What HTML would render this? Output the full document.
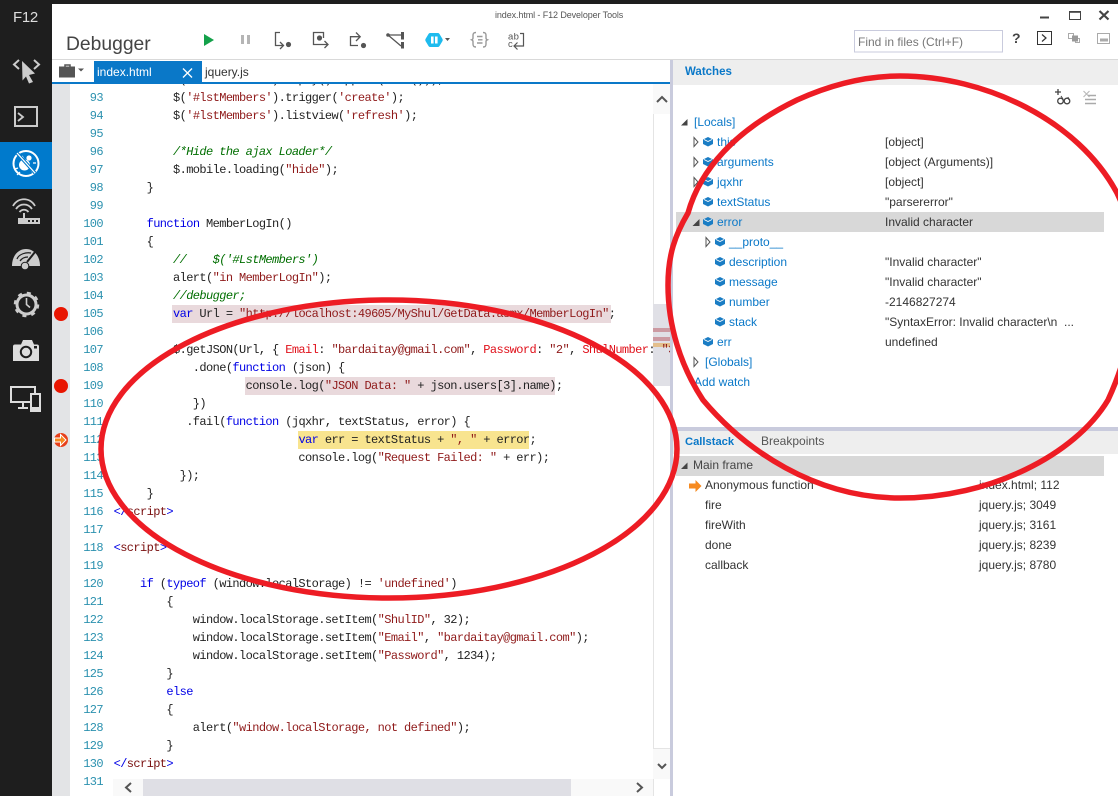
<!DOCTYPE html>
<html><head><meta charset="utf-8"><style>
html,body{margin:0;padding:0;background:#fff}
#p{position:relative;width:1118px;height:796px;overflow:hidden;background:#fff;font-family:"Liberation Sans",sans-serif;font-size:12px;color:#333}
.a{position:absolute}
.t{position:absolute;white-space:pre;line-height:20px;height:20px}
.n{position:absolute;left:70px;width:33px;text-align:right;font:12px/18px "Liberation Mono",monospace;letter-spacing:-.6px;color:#2b91af;height:18px}
.c{position:absolute;left:113.6px;font:12px/18px "Liberation Mono",monospace;letter-spacing:-.6px;color:#222;white-space:pre;height:18px}
.k{color:#0000e6}.s{color:#8f1a1a}.g{color:#006e00;font-style:italic}.r{color:#e0101a}.h{color:#7a1010}
.b{color:#0a78c8}
svg{position:absolute;overflow:visible}
svg text{font-family:"Liberation Sans",sans-serif}
</style></head><body><div id="p">

<!-- chrome -->
<div class="a" style="left:0;top:0;width:1118px;height:4px;background:#1e1e1e"></div>
<div class="a" style="left:0;top:0;width:52px;height:796px;background:#1e1e1e"></div>
<div class="a" style="left:0;top:142px;width:52px;height:47px;background:#007acc"></div>
<div class="a" style="left:13px;top:8px;font-size:15px;letter-spacing:-.3px;line-height:19px;color:#ddd">F12</div>
<div class="t" style="left:495px;top:5px;font-size:9px;letter-spacing:-.1px;color:#555">index.html - F12 Developer Tools</div>
<div class="t" style="left:66px;top:34px;font-size:19.3px;line-height:22px;height:24px;color:#444">Debugger</div>
<div class="a" style="left:52px;top:59px;width:1066px;height:1px;background:#d9d9d9"></div>

<!-- sidebar icons -->
<svg style="left:0;top:0" width="52" height="420" fill="none">
 <path d="M19 60l-5 4.500 5 4.500M34 60l5 4.500-5 4.500" stroke="#ccc" stroke-width="2"/>
 <path d="M22 61l13 12.500-6 1.500 4 7-4 1.500-3-7-3.500 4z" fill="#ccc"/>
 <rect x="15" y="107" width="22" height="19" stroke="#ccc" stroke-width="2"/>
 <path d="M18 113l5 4-5 4" stroke="#ccc" stroke-width="1.800"/>
 <circle cx="26" cy="163.500" r="12.500" stroke="#fff" stroke-width="2"/>
 <ellipse cx="24.500" cy="165" rx="5.500" ry="5.500" fill="#fff"/><circle cx="29" cy="158" r="2.600" fill="#fff"/>
 <path d="M18 168l-3 1M20 172l-3 3M22 156l2 3M33 163h3M31 170l2 3" stroke="#fff" stroke-width="1.200"/>
 <path d="M17 153l18 20" stroke="#007acc" stroke-width="3.400"/><path d="M17 153l18 20" stroke="#fff" stroke-width="1.300"/>
 <path d="M13 206C18 197 30 197 35 206M16 209C20 203 28 203 32 209M19.500 212C22 209 26 209 28.500 212" stroke="#ccc" stroke-width="1.800"/>
 <path d="M23 213h2v5h-2z" fill="#ccc"/><rect x="18" y="218" width="22" height="6" fill="#ccc"/>
 <path d="M28 220h2v2h-2zM32 220h2v2h-2zM36 220h2v2h-2z" fill="#1e1e1e"/>
 <path d="M12 266c0-10 6-17 14-17s14 7 14 17z" fill="#ccc"/>
 <path d="M17 259C19 254 26 252 31 253M20 261C22 258 25 257 28 257" stroke="#1e1e1e" stroke-width="1.200"/>
 <path d="M27 262l8-10" stroke="#1e1e1e" stroke-width="2"/><circle cx="25" cy="266" r="3.800" fill="#ccc" stroke="#1e1e1e"/>
 <circle cx="26.500" cy="304.500" r="9.500" stroke="#ccc" stroke-width="3"/>
 <circle cx="26.500" cy="304.500" r="11.500" stroke="#ccc" stroke-width="2.500" stroke-dasharray="4 5.030"/>
 <path d="M26.500 298v6.500l3.500 3" stroke="#ccc" stroke-width="1.600"/>
 <path d="M15 344.500h6l2-4.500h9l2 4.500h3q2 0 2 2V361H13v-14.500q0-2 2-2z" fill="#ddd"/>
 <circle cx="26" cy="352" r="5.200" fill="#ddd" stroke="#1e1e1e" stroke-width="2"/><rect x="34" y="346" width="3" height="2.500" fill="#1e1e1e"/>
 <rect x="11" y="387" width="24" height="15" stroke="#ddd" stroke-width="2"/>
 <path d="M23 403v4M18 408h10" stroke="#ddd" stroke-width="2"/>
 <rect x="31" y="394" width="9" height="17" fill="#1e1e1e" stroke="#ddd" stroke-width="2"/>
 <rect x="30" y="407" width="11" height="5" fill="#ddd"/>
</svg>

<!-- toolbar icons -->
<svg style="left:0;top:0" width="1118" height="60" fill="none">
 <path d="M204 34l10 6-10 6z" fill="#14a14a"/>
 <path d="M241 35h3v9h-3zM247 35h3v9h-3z" fill="#b5b5b5"/>
 <g stroke="#555" stroke-width="1.300">
  <path d="M280 32.500H275.500V45.500H283M280 42l3.500 3.500-3.500 3.500"/>
  <path d="M323.500 38V32.500H313.500V44.500H328M324.500 41l3.500 3.500-3.500 3.500"/>
  <path d="M358 45.500H350.500V36.700H360M356 32.500l4.200 4.200-4.200 4.300"/>
  <path d="M388 35H401M388 35L401 46"/>
 </g>
 <circle cx="288.500" cy="44.500" r="2.600" fill="#555"/><circle cx="319.500" cy="38" r="2.600" fill="#555"/><circle cx="363.500" cy="45.500" r="2.600" fill="#555"/>
 <path d="M401 32h3v7.500h-3zM401 42h3v6.500h-3z" fill="#555"/><circle cx="388" cy="35" r="1.800" fill="#555"/>
 <path d="M430 33h8q1 0 1.500 1l3 5q.5 1 0 2l-3 5q-.5 1-1.500 1h-8q-1 0-1.500-1l-3-5q-.5-1 0-2l3-5q.5-1 1.500-1z" fill="#1ebbee"/>
 <path d="M431 36.500h2.600v7h-2.600zM435 36.500h2.600v7h-2.600z" fill="#fff"/>
 <path d="M445 38h5l-2.500 3z" fill="#555"/>
 <path d="M476 32.500c-2.500 0-3 1-3 3v2.500c0 1-.5 1.500-1.300 1.800.8.300 1.300.8 1.300 1.800V44c0 2 .5 3 3 3M483 32.500c2.500 0 3 1 3 3v2.500c0 1 .5 1.500 1.300 1.800-.8.300-1.300.8-1.300 1.800V44c0 2-.5 3-3 3M477 36.500h5.500M478 39.800h4.500M477 43h5.500" stroke="#999" stroke-width="1.400"/>
 <text x="508" y="39.500" font-size="9.500" letter-spacing=".4" fill="#555">ab</text>
 <text x="508" y="47" font-size="9.500" fill="#555">c</text>
 <path d="M520 33.500H523.500V46H514M517.500 42.500L514 46l3.500 3.500" stroke="#555" stroke-width="1.200"/>
 <path d="M1040 17.500h9" stroke="#444" stroke-width="2"/>
 <rect x="1069.500" y="11.500" width="11" height="8" stroke="#444" stroke-width="1"/><path d="M1069.500 12h11" stroke="#444" stroke-width="1.600"/>
 <path d="M1099.500 11l9 8.500M1108.500 11l-9 8.500" stroke="#444" stroke-width="2.200"/>
 <rect x="854.500" y="30.500" width="148" height="21.500" stroke="#c9cbdd" fill="#fff"/>
 <rect x="1037.500" y="31.500" width="14" height="13" stroke="#333"/>
 <path d="M1042 34.500l4 3.500-4 3.500" stroke="#333" stroke-width="1.200"/>
 <rect x="1068.500" y="33.500" width="5" height="5" stroke="#aaa"/><rect x="1075.500" y="38.500" width="4" height="4" stroke="#aaa"/><rect x="1072" y="35.500" width="6" height="6" fill="#999"/>
 <rect x="1097.500" y="33.500" width="12" height="10" stroke="#aaa"/><rect x="1100" y="38.500" width="8" height="3" fill="#aaa"/>
</svg>
<div class="t" style="left:858px;top:32px;color:#777;font-size:12px">Find in files (Ctrl+F)</div>
<div class="t" style="left:1012px;top:28px;font-size:14px;font-weight:bold;color:#444">?</div>

<!-- tabs -->
<div class="a" style="left:52px;top:82px;width:618px;height:2px;background:#0a78c8"></div>
<div class="a" style="left:94px;top:61px;width:108px;height:21px;background:#0a78c8"></div>
<div class="t" style="left:97px;top:62px;color:#fff;font-size:12px">index.html</div>
<svg style="left:0;top:60px" width="240" height="24" fill="none">
 <path d="M183 8.500l9 9M192 8.500l-9 9" stroke="#fff" stroke-width="1.300"/>
 <path d="M59 6.500h16v11H59z" fill="#555"/><path d="M65 6.500V5h5v1.500" stroke="#555" stroke-width="1.500"/>
 <path d="M78 8.500h6l-3 3z" fill="#555"/>
</svg>
<div class="t" style="left:205px;top:62px;color:#333;font-size:12px">jquery.js</div>

<!-- gutter -->
<div class="a" style="left:52px;top:84px;width:18px;height:712px;background:#e3e4e6"></div>
<svg style="left:52px;top:300px" width="20" height="160">
 <circle cx="9" cy="14" r="7" fill="#e81500"/><circle cx="9" cy="86" r="7" fill="#e81500"/>
 <circle cx="9" cy="140" r="7" fill="#e8401a"/><path d="M2.500 138h6v-3.500l5.500 5.500-5.500 5.500V142h-6z" fill="#f68a1f" stroke="#fff" stroke-width="1"/>
</svg>

<!-- scrollbars -->
<div class="a" style="left:653px;top:84px;width:17px;height:712px;background:#fff;border-left:1px solid #e4e4e4;box-sizing:border-box"></div>
<div class="a" style="left:653px;top:84px;width:17px;height:30px;background:#f9f9f9"></div>
<div class="a" style="left:653px;top:304px;width:17px;height:82px;background:#e0e0e6"></div>
<div class="a" style="left:653px;top:328px;width:17px;height:4px;background:#cc9aa2"></div>
<div class="a" style="left:653px;top:337px;width:17px;height:4px;background:#cc9aa2"></div>
<div class="a" style="left:653px;top:343px;width:17px;height:4px;background:#e3bf8c"></div>
<div class="a" style="left:653px;top:748px;width:17px;height:31px;background:#f9f9f9;border-top:1px solid #e4e4e4;box-sizing:border-box"></div>
<div class="a" style="left:113px;top:779px;width:540px;height:17px;background:#f9f9f9"></div>
<div class="a" style="left:143px;top:779px;width:428px;height:17px;background:#dfdfe5"></div>
<svg style="left:0;top:0" width="680" height="796" fill="none">
 <path d="M657 102l5-5 5 5" stroke="#555" stroke-width="2"/>
 <path d="M658 764l4 4 4-4" stroke="#555" stroke-width="2"/>
 <path d="M131 783l-5 4.500 5 4.500" stroke="#555" stroke-width="2"/>
 <path d="M637 783l5 4.500-5 4.500" stroke="#555" stroke-width="2"/>
</svg>

<!-- highlights -->
<div class="a" style="left:172px;top:305px;width:439px;height:18px;background:#e9d9dc"></div>
<div class="a" style="left:245px;top:377px;width:310px;height:18px;background:#e9d9dc"></div>
<div class="a" style="left:298px;top:431px;width:231px;height:18px;background:#f8e48f"></div>

<!-- code -->
<div class="a" style="left:70px;top:84px;width:583px;height:695px;overflow:hidden">
 <div class="c" style="left:43.600px;top:-13px">         $('#lstMembers').empty().append(List()));</div>
</div>
<div class="n" style="top:89px">93</div><div class="c" style="top:89px">         $(<span class="s">'#lstMembers'</span>).trigger(<span class="s">'create'</span>);</div>
<div class="n" style="top:107px">94</div><div class="c" style="top:107px">         $(<span class="s">'#lstMembers'</span>).listview(<span class="s">'refresh'</span>);</div>
<div class="n" style="top:125px">95</div>
<div class="n" style="top:143px">96</div><div class="c g" style="top:143px">         /*Hide the ajax Loader*/</div>
<div class="n" style="top:161px">97</div><div class="c" style="top:161px">         $.mobile.loading(<span class="s">"hide"</span>);</div>
<div class="n" style="top:179px">98</div><div class="c" style="top:179px">     }</div>
<div class="n" style="top:197px">99</div>
<div class="n" style="top:215px">100</div><div class="c" style="top:215px">     <span class="k">function</span> MemberLogIn()</div>
<div class="n" style="top:233px">101</div><div class="c" style="top:233px">     {</div>
<div class="n" style="top:251px">102</div><div class="c g" style="top:251px">         //    $('#LstMembers')</div>
<div class="n" style="top:269px">103</div><div class="c" style="top:269px">         alert(<span class="s">"in MemberLogIn"</span>);</div>
<div class="n" style="top:287px">104</div><div class="c g" style="top:287px">         //debugger;</div>
<div class="n" style="top:305px">105</div><div class="c" style="top:305px">         <span class="k">var</span> Url = <span class="s">"http://localhost:49605/MyShul/GetData.asmx/MemberLogIn"</span>;</div>
<div class="n" style="top:323px">106</div>
<div class="n" style="top:341px">107</div><div class="c" style="top:341px;width:556px;overflow:hidden">         $.getJSON(Url, { <span class="r">Email</span>: <span class="s">"bardaitay@gmail.com"</span>, <span class="r">Password</span>: <span class="s">"2"</span>, <span class="r">ShulNumber</span>: <span class="s">"32"</span> })</div>
<div class="n" style="top:359px">108</div><div class="c" style="top:359px">            .done(<span class="k">function</span> (json) {</div>
<div class="n" style="top:377px">109</div><div class="c" style="top:377px">                    console.log(<span class="s">"JSON Data: "</span> + json.users[3].name);</div>
<div class="n" style="top:395px">110</div><div class="c" style="top:395px">            })</div>
<div class="n" style="top:413px">111</div><div class="c" style="top:413px">           .fail(<span class="k">function</span> (jqxhr, textStatus, error) {</div>
<div class="n" style="top:431px">112</div><div class="c" style="top:431px">                            <span class="k">var</span> err = textStatus + <span class="s">", "</span> + error;</div>
<div class="n" style="top:449px">113</div><div class="c" style="top:449px">                            console.log(<span class="s">"Request Failed: "</span> + err);</div>
<div class="n" style="top:467px">114</div><div class="c" style="top:467px">          });</div>
<div class="n" style="top:485px">115</div><div class="c" style="top:485px">     }</div>
<div class="n" style="top:503px">116</div><div class="c" style="top:503px"><span class="k">&lt;/</span><span class="h">script</span><span class="k">&gt;</span></div>
<div class="n" style="top:521px">117</div>
<div class="n" style="top:539px">118</div><div class="c" style="top:539px"><span class="k">&lt;</span><span class="h">script</span><span class="k">&gt;</span></div>
<div class="n" style="top:557px">119</div>
<div class="n" style="top:575px">120</div><div class="c" style="top:575px">    <span class="k">if</span> (<span class="k">typeof</span> (window.localStorage) != <span class="s">'undefined'</span>)</div>
<div class="n" style="top:593px">121</div><div class="c" style="top:593px">        {</div>
<div class="n" style="top:611px">122</div><div class="c" style="top:611px">            window.localStorage.setItem(<span class="s">"ShulID"</span>, 32);</div>
<div class="n" style="top:629px">123</div><div class="c" style="top:629px">            window.localStorage.setItem(<span class="s">"Email"</span>, <span class="s">"bardaitay@gmail.com"</span>);</div>
<div class="n" style="top:647px">124</div><div class="c" style="top:647px">            window.localStorage.setItem(<span class="s">"Password"</span>, 1234);</div>
<div class="n" style="top:665px">125</div><div class="c" style="top:665px">        }</div>
<div class="n" style="top:683px">126</div><div class="c" style="top:683px">        <span class="k">else</span></div>
<div class="n" style="top:701px">127</div><div class="c" style="top:701px">        {</div>
<div class="n" style="top:719px">128</div><div class="c" style="top:719px">            alert(<span class="s">"window.localStorage, not defined"</span>);</div>
<div class="n" style="top:737px">129</div><div class="c" style="top:737px">        }</div>
<div class="n" style="top:755px">130</div><div class="c" style="top:755px"><span class="k">&lt;/</span><span class="h">script</span><span class="k">&gt;</span></div>
<div class="n" style="top:773px">131</div>

<!-- splitter / right panes -->
<div class="a" style="left:670px;top:60px;width:3px;height:736px;background:#c9cbdd"></div>
<div class="a" style="left:673px;top:60px;width:445px;height:25px;background:#eeeeee"></div>
<div class="t" style="left:685px;top:62px;color:#0a78c8;font-weight:bold;font-size:11.500px">Watches</div>
<svg style="left:1050px;top:86px" width="60" height="24" fill="none">
 <path d="M8 3v6M5 6h6" stroke="#444" stroke-width="1.300"/>
 <circle cx="10.500" cy="15" r="2.800" stroke="#444" stroke-width="1.300"/><circle cx="17" cy="15" r="2.800" stroke="#444" stroke-width="1.300"/>
 <path d="M13 14h1.500M11 10l2 3M18 11l1 3" stroke="#444" stroke-width="1"/>
 <path d="M33.500 5l6 6M39.500 5l-6 6" stroke="#bbb" stroke-width="1.200"/>
 <path d="M38 9.500h8M35 13.500h11M35 17.500h11" stroke="#aaa" stroke-width="1.500"/>
</svg>

<div class="a" style="left:676px;top:212px;width:428px;height:20px;background:#d8d8d8"></div>
<div class="t b" style="left:694px;top:112px">[Locals]</div>
<div class="t b" style="left:717px;top:132px">this</div><div class="t" style="left:885px;top:132px">[object]</div>
<div class="t b" style="left:717px;top:152px">arguments</div><div class="t" style="left:885px;top:152px">[object (Arguments)]</div>
<div class="t b" style="left:717px;top:172px">jqxhr</div><div class="t" style="left:885px;top:172px">[object]</div>
<div class="t b" style="left:717px;top:192px">textStatus</div><div class="t" style="left:885px;top:192px">"parsererror"</div>
<div class="t b" style="left:717px;top:212px">error</div><div class="t" style="left:885px;top:212px">Invalid character</div>
<div class="t b" style="left:729px;top:232px">__proto__</div>
<div class="t b" style="left:729px;top:252px">description</div><div class="t" style="left:885px;top:252px">"Invalid character"</div>
<div class="t b" style="left:729px;top:272px">message</div><div class="t" style="left:885px;top:272px">"Invalid character"</div>
<div class="t b" style="left:729px;top:292px">number</div><div class="t" style="left:885px;top:292px">-2146827274</div>
<div class="t b" style="left:729px;top:312px">stack</div><div class="t" style="left:885px;top:312px">"SyntaxError: Invalid character\n  ...</div>
<div class="t b" style="left:717px;top:332px">err</div><div class="t" style="left:885px;top:332px">undefined</div>
<div class="t b" style="left:705px;top:352px">[Globals]</div>
<div class="t b" style="left:694px;top:372px">Add watch</div>

<svg style="left:673px;top:110px" width="60" height="270">
 <path d="M8 15.500h6.500V9z" fill="#444"/>
 <path d="M21 27.500l4 4.500-4 4.500zM21 47.500l4 4.500-4 4.500zM21 67.500l4 4.500-4 4.500zM33 127.500l4 4.500-4 4.500zM21 247.500l4 4.500-4 4.500z" fill="#fff" stroke="#555"/>
 <path d="M19.500 116h7v-7z" fill="#444"/>
 <g transform="translate(0 -2.500)">
 <g fill="#1a7dc4">
  <path d="M30 32l5-2.500 5 2.500v4.500l-5 2.500-5-2.500z"/>
  <path d="M30 52l5-2.500 5 2.500v4.500l-5 2.500-5-2.500z"/>
  <path d="M30 72l5-2.500 5 2.500v4.500l-5 2.500-5-2.500z"/>
  <path d="M30 92l5-2.500 5 2.500v4.500l-5 2.500-5-2.500z"/>
  <path d="M30 112l5-2.500 5 2.500v4.500l-5 2.500-5-2.500z"/>
  <path d="M42 132l5-2.500 5 2.500v4.500l-5 2.500-5-2.500z"/>
  <path d="M42 152l5-2.500 5 2.500v4.500l-5 2.500-5-2.500z"/>
  <path d="M42 172l5-2.500 5 2.500v4.500l-5 2.500-5-2.500z"/>
  <path d="M42 192l5-2.500 5 2.500v4.500l-5 2.500-5-2.500z"/>
  <path d="M42 212l5-2.500 5 2.500v4.500l-5 2.500-5-2.500z"/>
  <path d="M30 232l5-2.500 5 2.500v4.500l-5 2.500-5-2.500z"/>
 </g>
 <g stroke="#fff" stroke-width=".8" fill="none">
  <path d="M31 32l4 2 4-2M31 52l4 2 4-2M31 72l4 2 4-2M31 92l4 2 4-2M31 112l4 2 4-2M43 132l4 2 4-2M43 152l4 2 4-2M43 172l4 2 4-2M43 192l4 2 4-2M43 212l4 2 4-2M31 232l4 2 4-2"/>
 </g>
 </g>
</svg>

<div class="a" style="left:673px;top:427px;width:445px;height:4px;background:#c9cbdd"></div>
<div class="a" style="left:673px;top:431px;width:445px;height:23px;background:#eeeeee"></div>
<div class="t" style="left:685px;top:432px;color:#0a78c8;font-weight:bold;font-size:11.200px">Callstack</div>
<div class="t" style="left:761px;top:431px;color:#555">Breakpoints</div>
<div class="a" style="left:676px;top:456px;width:428px;height:20px;background:#d8d8d8"></div>
<svg style="left:673px;top:456px" width="40" height="40">
 <path d="M8 13h6.500V6.500z" fill="#444"/>
 <path d="M16 27.500h6.500V24l6 6-6 6v-3.500H16z" fill="#f68a1f"/>
</svg>
<div class="t" style="left:693px;top:455px;color:#444">Main frame</div>
<div class="t" style="left:705px;top:475px">Anonymous function</div><div class="t" style="left:979px;top:475px">index.html; 112</div>
<div class="t" style="left:705px;top:495px">fire</div><div class="t" style="left:979px;top:495px">jquery.js; 3049</div>
<div class="t" style="left:705px;top:515px">fireWith</div><div class="t" style="left:979px;top:515px">jquery.js; 3161</div>
<div class="t" style="left:705px;top:535px">done</div><div class="t" style="left:979px;top:535px">jquery.js; 8239</div>
<div class="t" style="left:705px;top:555px">callback</div><div class="t" style="left:979px;top:555px">jquery.js; 8780</div>

<!-- red ellipses -->
<svg style="left:0;top:0" width="1118" height="796" fill="none">
 <ellipse cx="389" cy="449" rx="288" ry="149" stroke="#ed1c24" stroke-width="5.500"/>
 <path d="M900 76C985 76 1078 120 1117 193C1140 240 1145 320 1108 400C1075 455 990 498 900 498C815 498 745 450 703 400C680 365 668 325 668 285C668 255 675 235 688 213C700 170 735 130 797 100C830 85 865 76 900 76Z" stroke="#ed1c24" stroke-width="5.500"/>
</svg>
</div></body></html>
